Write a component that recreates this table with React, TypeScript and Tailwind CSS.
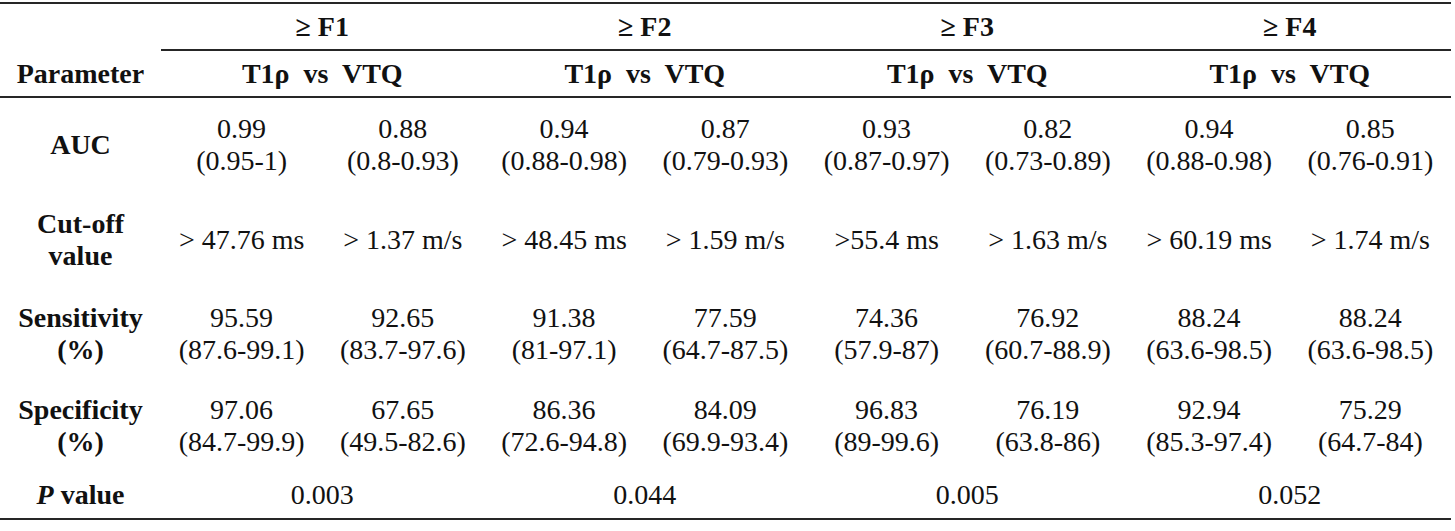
import React from "react";

const groups = ["≥ F1", "≥ F2", "≥ F3", "≥ F4"];

type Cell = [string, string?];

const rows: { label: React.ReactNode; h: string; cells: Cell[] }[] = [
  {
    label: <>AUC</>,
    h: "h-[93px]",
    cells: [
      ["0.99", "(0.95-1)"],
      ["0.88", "(0.8-0.93)"],
      ["0.94", "(0.88-0.98)"],
      ["0.87", "(0.79-0.93)"],
      ["0.93", "(0.87-0.97)"],
      ["0.82", "(0.73-0.89)"],
      ["0.94", "(0.88-0.98)"],
      ["0.85", "(0.76-0.91)"],
    ],
  },
  {
    label: (
      <>
        Cut-off
        <br />
        value
      </>
    ),
    h: "h-[97px]",
    cells: [
      ["> 47.76 ms"],
      ["> 1.37 m/s"],
      ["> 48.45 ms"],
      ["> 1.59 m/s"],
      [">55.4 ms"],
      ["> 1.63 m/s"],
      ["> 60.19 ms"],
      ["> 1.74 m/s"],
    ],
  },
  {
    label: (
      <>
        Sensitivity
        <br />
        (%)
      </>
    ),
    h: "h-[92px]",
    cells: [
      ["95.59", "(87.6-99.1)"],
      ["92.65", "(83.7-97.6)"],
      ["91.38", "(81-97.1)"],
      ["77.59", "(64.7-87.5)"],
      ["74.36", "(57.9-87)"],
      ["76.92", "(60.7-88.9)"],
      ["88.24", "(63.6-98.5)"],
      ["88.24", "(63.6-98.5)"],
    ],
  },
  {
    label: (
      <>
        Specificity
        <br />
        (%)
      </>
    ),
    h: "h-[92px]",
    cells: [
      ["97.06", "(84.7-99.9)"],
      ["67.65", "(49.5-82.6)"],
      ["86.36", "(72.6-94.8)"],
      ["84.09", "(69.9-93.4)"],
      ["96.83", "(89-99.6)"],
      ["76.19", "(63.8-86)"],
      ["92.94", "(85.3-97.4)"],
      ["75.29", "(64.7-84)"],
    ],
  },
];

const pvals = ["0.003", "0.044", "0.005", "0.052"];

export default function App() {
  return (
    <div className="w-[1455px] h-[531px] bg-white">
      <div className="w-[1451px] pt-[2px] font-['Liberation_Serif'] text-[28px] leading-[32px] text-[#111]">
        <div className="border-t-2 border-[#262626]" />
        {/* header row 1 */}
        <div className="grid grid-cols-[161px_repeat(4,1fr)] h-[47px]">
          <div />
          {groups.map((g) => (
            <div
              key={g}
              className="flex items-center justify-center font-bold border-b-2 border-[#262626]"
            >
              {g}
            </div>
          ))}
        </div>
        {/* header row 2 */}
        <div className="grid grid-cols-[161px_repeat(4,1fr)] h-[47px] border-b-2 border-[#262626]">
          <div className="flex items-center justify-center font-bold">Parameter</div>
          {groups.map((g) => (
            <div
              key={g}
              className="flex items-center justify-center font-bold whitespace-pre"
            >
              {"T1ρ  vs  VTQ"}
            </div>
          ))}
        </div>
        {rows.map((r, i) => (
          <div
            key={i}
            className={`grid grid-cols-[161px_repeat(8,1fr)] ${r.h}`}
          >
            <div className="flex items-center justify-center text-center font-bold">
              <div>{r.label}</div>
            </div>
            {r.cells.map((c, j) => (
              <div
                key={j}
                className="flex items-center justify-center text-center whitespace-nowrap"
              >
                <div>
                  <div>{c[0]}</div>
                  {c[1] && <div>{c[1]}</div>}
                </div>
              </div>
            ))}
          </div>
        ))}
        <div className="grid grid-cols-[161px_repeat(4,1fr)] h-[48px] border-b-2 border-[#262626]">
          <div className="flex items-center justify-center font-bold">
            <span className="italic">P</span>&nbsp;value
          </div>
          {pvals.map((p) => (
            <div key={p} className="flex items-center justify-center">
              {p}
            </div>
          ))}
        </div>
      </div>
    </div>
  );
}
